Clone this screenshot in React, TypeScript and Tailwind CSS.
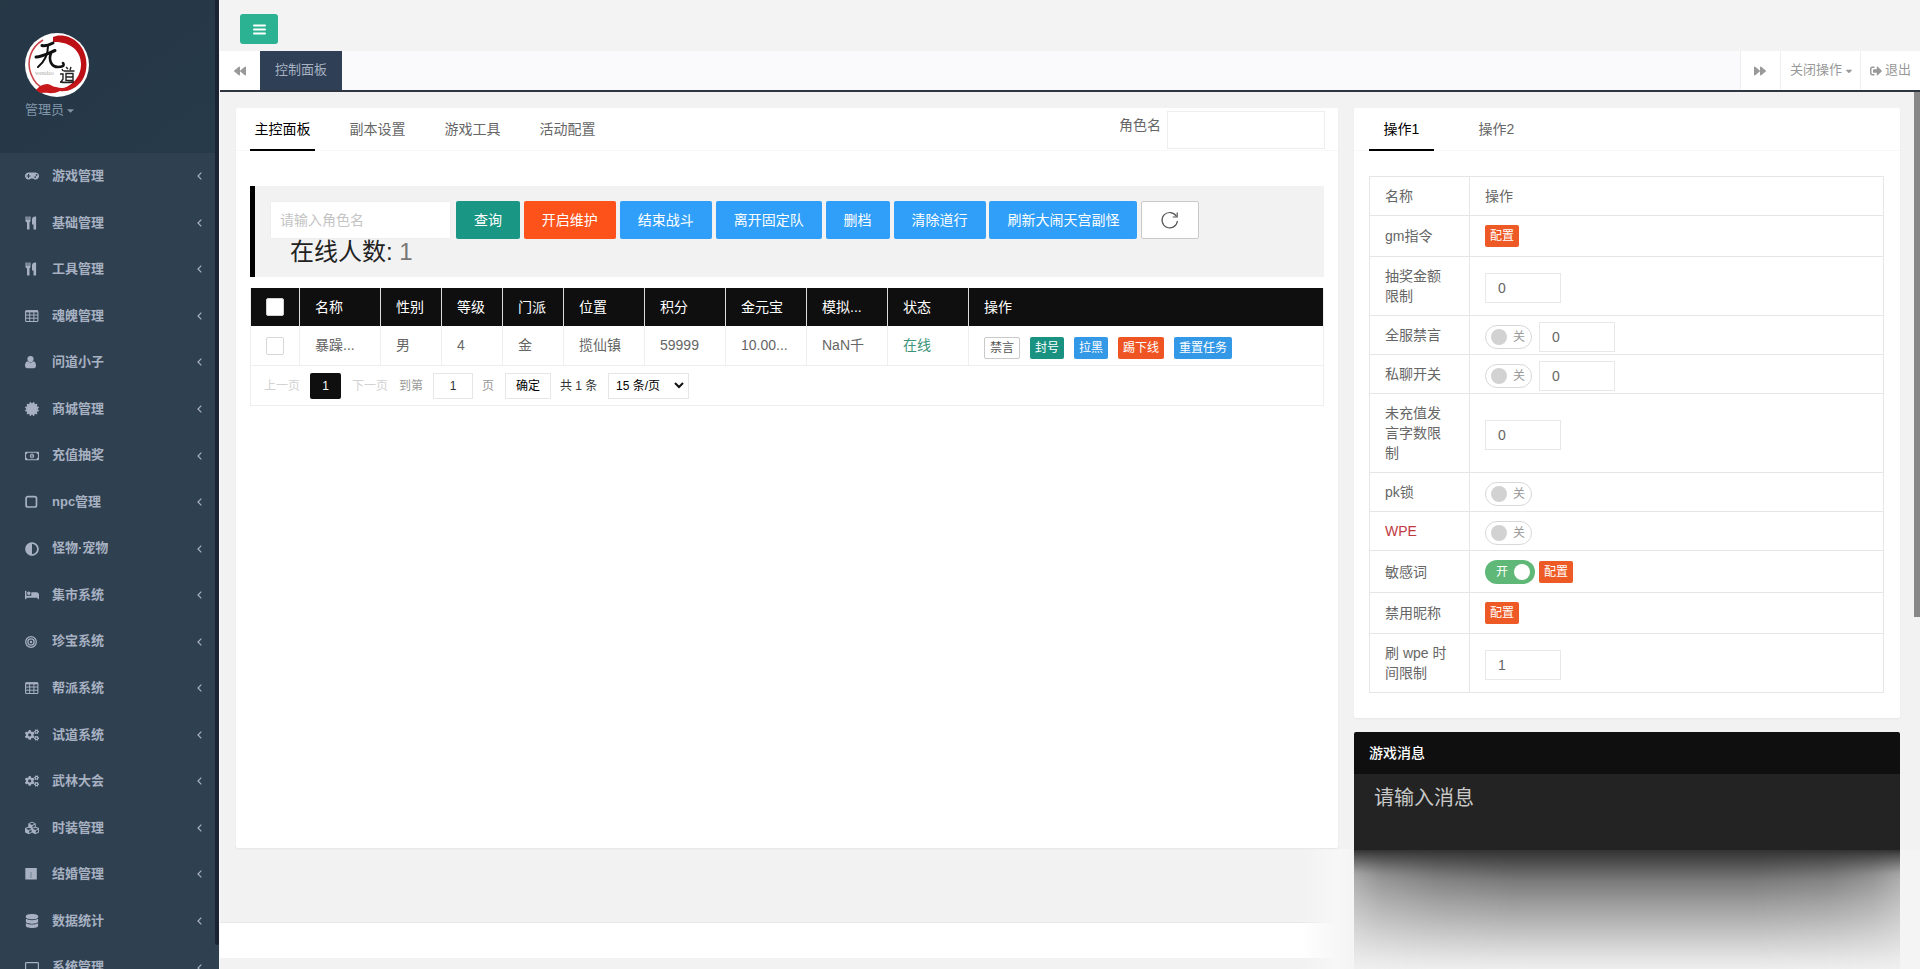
import type { ReactNode } from 'react';
import type { IconType } from 'react-icons';
import {
  FaAdjust, FaBackward, FaBed, FaCaretDown, FaCertificate, FaCogs, FaCubes, FaDatabase, FaForward, FaGamepad,
  FaRegMoneyBillAlt, FaSignOutAlt,
} from 'react-icons/fa';

type IconProps = { className?: string };

function CutleryIcon({ className }: IconProps) {
  return (
    <svg className={className} viewBox="0 0 14 14" fill="currentColor">
      <path d="M0.500 0.500 h1.200 v3.500 h0.700 v-3.500 h1.200 v3.500 h0.700 v-3.500 h1.200 v4.500 q0 1-1 1.400 v6.600 q0 0.500-0.500 0.500 h-1.500 q-0.500 0-0.500-0.500 v-6.600 q-1.500-0.400-1.500-1.400 Z" />
      <path d="M7 3.500 q0-3 3.500-3 h0.600 v12.500 q0 0.500-0.500 0.500 h-1.600 q-0.500 0-0.500-0.500 v-4.500 h-1.500 Z" />
    </svg>
  );
}

function TableIcon({ className }: IconProps) {
  return (
    <svg className={className} viewBox="0 0 14 14" fill="none" stroke="currentColor">
      <rect x="0.600" y="1.800" width="12.300" height="10.700" rx="1" strokeWidth="1.100" />
      <path d="M0.600 2.400 H13" strokeWidth="2" />
      <path d="M0.600 6 H13 M0.600 9.200 H13 M4.700 2 V12.500 M8.900 2 V12.500" strokeWidth="1" />
    </svg>
  );
}

function UserIcon({ className }: IconProps) {
  return (
    <svg className={className} viewBox="0 0 14 14" fill="currentColor">
      <circle cx="5.500" cy="4" r="3.100" />
      <path d="M2.600 6.300 Q5.500 8.800 8.400 6.300 Q11 6.800 11 10.800 Q11 13.200 9 13.200 H2 Q0 13.200 0 10.800 Q0 6.800 2.600 6.300 Z" />
    </svg>
  );
}

function SquareIcon({ className }: IconProps) {
  return (
    <svg className={className} viewBox="0 0 14 14" fill="none" stroke="currentColor" strokeWidth="1.700">
      <rect x="1.100" y="1.600" width="10.400" height="10.400" rx="1.800" />
    </svg>
  );
}

function BullseyeIcon({ className }: IconProps) {
  return (
    <svg className={className} viewBox="0 0 14 14" fill="none" stroke="currentColor" strokeWidth="1.300">
      <circle cx="6" cy="7" r="5.300" />
      <circle cx="6" cy="7" r="3.100" />
      <circle cx="6" cy="7" r="1.200" fill="currentColor" stroke="none" />
    </svg>
  );
}

function PageIcon({ className }: IconProps) {
  return (
    <svg className={className} viewBox="0 0 14 14">
      <rect x="0.300" y="1" width="11.500" height="11.500" fill="currentColor" />
      <path d="M6 5 V11" stroke="#7f8fa1" strokeWidth="1.300" />
    </svg>
  );
}

function LaptopIcon({ className }: IconProps) {
  return (
    <svg className={className} viewBox="0 0 14 14" fill="none" stroke="currentColor" strokeWidth="1.200">
      <rect x="0.600" y="1.600" width="12.800" height="9.500" rx="0.800" />
      <path d="M4 13 H10" />
    </svg>
  );
}

const menu: { icon: IconType | ((p: IconProps) => ReactNode); label: string }[] = [
  { icon: FaGamepad, label: '游戏管理' },
  { icon: CutleryIcon, label: '基础管理' },
  { icon: CutleryIcon, label: '工具管理' },
  { icon: TableIcon, label: '魂魄管理' },
  { icon: UserIcon, label: '问道小子' },
  { icon: FaCertificate, label: '商城管理' },
  { icon: FaRegMoneyBillAlt, label: '充值抽奖' },
  { icon: SquareIcon, label: 'npc管理' },
  { icon: FaAdjust, label: '怪物·宠物' },
  { icon: FaBed, label: '集市系统' },
  { icon: BullseyeIcon, label: '珍宝系统' },
  { icon: TableIcon, label: '帮派系统' },
  { icon: FaCogs, label: '试道系统' },
  { icon: FaCogs, label: '武林大会' },
  { icon: FaCubes, label: '时装管理' },
  { icon: PageIcon, label: '结婚管理' },
  { icon: FaDatabase, label: '数据统计' },
  { icon: LaptopIcon, label: '系统管理' },
];

function Logo() {
  return (
    <svg className="w-16 h-16" viewBox="0 0 64 64">
      <circle cx="32" cy="32" r="32" fill="#fff" />
      <path d="M28 4 C34 1 46 2 54 11 C64 22 64 42 54 51 C47 58 40 59 33 57 C46 54 56 45 56 31 C56 17 44 8 28 9 Z" fill="#bd1016" />
      <path d="M18 7 C6 14 1 28 6 41 C9 49 14 54 20 56" stroke="#c9454a" strokeWidth="1.600" fill="none" />
      <path d="M11 57 C14 53 18 51 22 51 C26 51 27 54 31 54 C40 57 50 53 57 44 C52 56 42 59 35 58 C28 62 20 59 17 60 C14 60 13 58 11 57 Z" fill="#c8181c" />
      <text x="10" y="42" fontSize="6" fill="#aaa" fontFamily="Liberation Serif">wendao</text>
      <path d="M17 12.500 C21 13.500 24 12 28 10" stroke="#111" strokeWidth="3" strokeLinecap="round" fill="none" />
      <path d="M11 24 C17 24 24 20 30 17.500" stroke="#111" strokeWidth="3" strokeLinecap="round" fill="none" />
      <path d="M23 13 C23 22 19 29 13 34" stroke="#111" strokeWidth="2" strokeLinecap="round" fill="none" />
      <path d="M26 20 C23 28 27 34 33 34 C37 34 40 33 38 30" stroke="#111" strokeWidth="2.600" strokeLinecap="round" fill="none" />
      <path d="M41 34 l2 2 M46 34 l-1 3 M38.500 38 h11 M41 40.500 h7 v7 h-7 z M41 44 h7 M37 36 l1 2 M35 41 h3 v5 l-2 3 M35 49 q6 1 14 0" stroke="#222" strokeWidth="1.400" fill="none" />
    </svg>
  );
}

function Sidebar() {
  return (
    <nav className="relative w-[220px] h-full shrink-0 bg-[#2f4050] border-r border-[#f8f8fc] overflow-hidden text-[13px]">
      <div className="h-[153px] bg-linear-to-br from-[#263746] to-[#263a4a] px-[25px] pt-[33px]">
        <Logo />
        <div className="flex items-center gap-px mt-[3px] leading-5 text-[#8095a8]">
          管理员
          <FaCaretDown className="size-[11px]" />
        </div>
      </div>
      {menu.map(({ icon: Icon, label }) => (
        <div key={label} className="flex items-center h-[46.550px] pl-[25px] pr-[17px] font-bold text-[#a7b1c2]">
          <span className="w-[27px]">
            <Icon className="size-[14px]" />
          </span>
          <span className="flex-1">{label}</span>
          <svg className="w-[5px] h-2" viewBox="0 0 5 8" fill="none" stroke="currentColor" strokeWidth="1.200">
            <path d="M4.300 0.600 L1 4 L4.300 7.400" />
          </svg>
        </div>
      ))}
      <div className="absolute right-0 top-0 w-1 h-[945px] rounded-b bg-[#1c2333]" />
    </nav>
  );
}

function TopBar() {
  return (
    <header className="shrink-0 text-[13px] text-[#999]">
      <div className="h-[51px] bg-[#f3f3f4] pl-5 pt-[14px]">
        <div className="flex items-center justify-center w-[38px] h-[30px] rounded-[3px] bg-[#2bb293] text-white">
          <svg className="w-[13px] h-[11px]" viewBox="0 0 13 11" stroke="currentColor" strokeWidth="2" strokeLinecap="round">
            <path d="M1 1.500 H12 M1 5.500 H12 M1 9.500 H12" />
          </svg>
        </div>
      </div>
      <div className="flex h-[41px] bg-[#fafafc] border-b-2 border-[#2f3540]">
        <div className="flex items-center justify-center w-10 bg-white">
          <FaBackward className="size-3" />
        </div>
        <div className="flex items-center justify-center w-[82px] bg-[#2f4056] text-[#a7b1c2]">控制面板</div>
        <div className="flex-1" />
        <div className="flex items-center w-10 pl-[13px] bg-white border-l border-[#eee]">
          <FaForward className="size-3" />
        </div>
        <div className="flex items-center gap-[2px] w-20 pl-[9px] bg-white border-l border-[#eee]">
          关闭操作
          <FaCaretDown className="size-[10px]" />
        </div>
        <div className="flex items-center gap-[3px] w-[60px] pl-[9px] bg-white border-l border-[#eee]">
          <FaSignOutAlt className="size-3" />
          退出
        </div>
      </div>
    </header>
  );
}

function Tabs({ items }: { items: string[] }) {
  return (
    <div className="flex gap-[30px]">
      {items.map((item, i) => (
        <div
          key={item}
          className={`w-[65px] h-[43px] leading-[43px] text-center ${i === 0 ? 'border-b-2 border-black text-black' : 'text-[#666]'}`}
        >
          {item}
        </div>
      ))}
    </div>
  );
}

const actions = [
  { label: '查询', color: 'bg-[#1a9684]' },
  { label: '开启维护', color: 'bg-[#fd5219]' },
  { label: '结束战斗', color: 'bg-[#2f9ffa]' },
  { label: '离开固定队', color: 'bg-[#2f9ffa]' },
  { label: '删档', color: 'bg-[#2f9ffa]' },
  { label: '清除道行', color: 'bg-[#2f9ffa]' },
  { label: '刷新大闹天宫副怪', color: 'bg-[#2f9ffa]' },
];

function RefreshIcon() {
  return (
    <svg className="size-5" viewBox="0 0 20 20" fill="none" stroke="#555" strokeWidth="1.200">
      <path d="M16.500 6.500 A7.700 7.700 0 1 0 17.400 11" />
      <path d="M17.200 2.500 V7 H12.700" />
    </svg>
  );
}

function Toolbar() {
  return (
    <div className="h-[91px] border-l-[5px] border-black bg-[#f2f2f2] pl-[15px] pt-[15px]">
      <div className="flex gap-[3.930px]">
        <div className="w-[181px] h-[38px] mr-px pl-[9px] bg-white border border-[#eee] leading-9 text-[#c4c4c4]">
          请输入角色名
        </div>
        {actions.map((a) => (
          <div key={a.label} className={`${a.color} h-[38px] px-[18px] leading-[38px] rounded-xs whitespace-nowrap text-white`}>
            {a.label}
          </div>
        ))}
        <div className="flex items-center justify-center w-[58px] h-[38px] rounded-xs bg-white border border-[#c9c9c9]">
          <RefreshIcon />
        </div>
      </div>
      <div className="pl-5 text-2xl leading-[26px] text-[#222]">
        在线人数: <span className="text-[#777]">1</span>
      </div>
    </div>
  );
}

const columns = ['名称', '性别', '等级', '门派', '位置', '积分', '金元宝', '模拟...', '状态', '操作'];
const player = ['暴躁...', '男', '4', '金', '揽仙镇', '59999', '10.00...', 'NaN千', '在线'];
const grid = 'grid grid-cols-[49px_81px_61px_61px_61px_81px_81px_81px_81px_81px_1fr]';

function SmallButton({ color, children }: { color: string; children: ReactNode }) {
  return <span className={`${color} h-[22px] px-[5px] text-xs rounded-xs whitespace-nowrap`}>{children}</span>;
}

function PlayerTable() {
  return (
    <div className="mt-[11px] border border-t-0 border-[#eee]">
      <div className={`${grid} h-[38px] bg-[#0f0f0f] text-white leading-[38px]`}>
        <div className="flex items-center justify-center border-r border-[#ddd]">
          <span className="size-[18px] rounded-xs bg-white border border-[#d2d2d2]" />
        </div>
        {columns.map((c) => (
          <div key={c} className="pl-[15px] border-r border-[#ddd] last:border-0">{c}</div>
        ))}
      </div>
      <div className={`${grid} h-10 border-b border-[#eee] leading-[39px]`}>
        <div className="flex items-center justify-center border-r border-[#eee]">
          <span className="size-[18px] rounded-xs bg-white border border-[#d8d8d8]" />
        </div>
        {player.map((v) => (
          <div key={v} className={`pl-[15px] border-r border-[#eee] ${v === '在线' ? 'text-[#3d9478]' : ''}`}>{v}</div>
        ))}
        <div className="flex items-center gap-[10px] pl-[15px] pt-1 text-white">
          <SmallButton color="bg-white border border-[#c9c9c9] text-[#555] leading-5">禁言</SmallButton>
          <SmallButton color="bg-[#1a9281] leading-[22px]">封号</SmallButton>
          <SmallButton color="bg-[#3398e6] leading-[22px]">拉黑</SmallButton>
          <SmallButton color="bg-[#ee5522] leading-[22px]">踢下线</SmallButton>
          <SmallButton color="bg-[#3398e6] leading-[22px]">重置任务</SmallButton>
        </div>
      </div>
      <div className="flex items-center h-[39px] pl-[13px] text-xs text-[#333] *:shrink-0">
        <span className="w-[46px] text-[#d2d2d2]">上一页</span>
        <span className="w-[31px] h-[26px] leading-[26px] text-center rounded-xs bg-[#0f0f0f] text-white">1</span>
        <span className="w-[47px] ml-[11px] text-[#d2d2d2]">下一页</span>
        <span className="w-[34px] text-[#999]">到第</span>
        <span className="w-10 h-[26px] leading-6 text-center border border-[#e6e6e6]">1</span>
        <span className="w-[32px] pl-[9px] text-[#999]">页</span>
        <span className="w-[46px] h-[26px] leading-6 text-center border border-[#e6e6e6] text-black">确定</span>
        <span className="pl-[9px] w-[57px] whitespace-nowrap">共 1 条</span>
        <span className="flex items-center justify-between w-[81px] h-[26px] pl-[7px] pr-1 border border-[#e6e6e6] text-black">
          15 条/页
          <svg className="w-[10px] h-[7px]" viewBox="0 0 10 7" fill="none" stroke="#111" strokeWidth="2">
            <path d="M1 1 L5 5 L9 1" />
          </svg>
        </span>
      </div>
    </div>
  );
}

function MainPanel() {
  return (
    <section className="w-[1102px] h-[740px] rounded-xs bg-white shadow-xs px-[14px]">
      <div className="flex justify-between -mx-[14px] pl-[14px] pr-[13px] h-[43px] border-b border-[#f8f8f8]">
        <Tabs items={['主控面板', '副本设置', '游戏工具', '活动配置']} />
        <div className="flex">
          <span className="pr-[6px] leading-[34px]">角色名</span>
          <div className="w-[158px] h-[38px] mt-[3px] bg-white border border-[#eee]" />
        </div>
      </div>
      <div className="pt-[35px]">
        <Toolbar />
        <PlayerTable />
      </div>
    </section>
  );
}

function Toggle({ on }: { on?: boolean }) {
  if (on) {
    return (
      <span className="flex items-center justify-between w-[50px] h-6 pl-[11px] pr-[5px] rounded-full bg-[#5fb878] text-xs text-white">
        开
        <span className="size-4 rounded-full bg-white" />
      </span>
    );
  }
  return (
    <span className="relative top-[2px] flex items-center justify-between w-[47px] h-6 pl-[5px] pr-[6px] rounded-full bg-white border border-[#d8d8d8] text-xs text-[#999]">
      <span className="size-4 rounded-full bg-[#d2d2d2]" />
      关
    </span>
  );
}

function NumberBox({ value, beside }: { value: string; beside?: boolean }) {
  return (
    <span className={`${beside ? 'mt-[3px] ml-[3px]' : 'mt-[3px]'} w-[76px] h-[30px] pl-[12px] leading-7 border border-[#e8e8e8] bg-white`}>
      {value}
    </span>
  );
}

const config = <SmallButton color="bg-[#ed5a26] text-white leading-[22px]">配置</SmallButton>;

const settings: { label: string; height: string; color?: string; control: ReactNode }[] = [
  { label: '名称', height: 'h-[39px]', control: '操作' },
  { label: 'gm指令', height: 'h-[41px]', control: config },
  { label: '抽奖金额限制', height: 'h-[59px]', control: <NumberBox value="0" /> },
  { label: '全服禁言', height: 'h-[39px]', control: <><Toggle /><NumberBox value="0" beside /></> },
  { label: '私聊开关', height: 'h-[39px]', control: <><Toggle /><NumberBox value="0" beside /></> },
  { label: '未充值发言字数限制', height: 'h-[79px]', control: <NumberBox value="0" /> },
  { label: 'pk锁', height: 'h-[39px]', control: <Toggle /> },
  { label: 'WPE', height: 'h-[39px]', color: 'text-[#c0393f]', control: <Toggle /> },
  { label: '敏感词', height: 'h-[42px]', control: <><Toggle on />{config}</> },
  { label: '禁用昵称', height: 'h-[41px]', control: config },
  { label: '刷 wpe 时间限制', height: 'h-[59px]', control: <NumberBox value="1" /> },
];

function SettingsPanel() {
  return (
    <section className="h-[610px] rounded-xs bg-white shadow-xs pl-[15px] pr-4">
      <div className="-ml-[15px] -mr-4 pl-[15px] h-[43px] border-b border-[#f8f8f8]">
        <Tabs items={['操作1', '操作2']} />
      </div>
      <div className="mt-[25px] border-t border-l border-[#e6e6e6]">
        {settings.map((s) => (
          <div key={s.label} className={`${s.height} flex border-b border-r border-[#e6e6e6]`}>
            <div className={`flex items-center w-[100px] px-[15px] border-r border-[#e6e6e6] leading-5 ${s.color ?? ''}`}>{s.label}</div>
            <div className="flex items-center gap-1 pl-[15px]">{s.control}</div>
          </div>
        ))}
      </div>
    </section>
  );
}

function MessagePanel() {
  return (
    <section className="mt-[14px]">
      <div className="h-[42px] pl-[15px] leading-[42px] rounded-t-xs bg-[#0f0f0f] text-white font-medium">游戏消息</div>
      <div className="h-[76px] pl-5 pt-[9px] bg-[#232323] text-xl leading-[30px] text-[#c8c8c8]">请输入消息</div>
      {/* layer shadow, clipped to the card and lighter towards both sides */}
      <div className="h-[119px] bg-[linear-gradient(#333_0%,#525252_12%,#7a7a7a_26%,#999_43%,#b4b4b4_60%,#cfcfcf_77%,#e5e5e5_92%,#eee_100%)]">
        <div className="h-full bg-[linear-gradient(90deg,#f2f2f270_0%,#f2f2f240_5%,#f2f2f218_15%,#f2f2f200_30%,#f2f2f200_72%,#f2f2f218_87%,#f2f2f240_95%,#f2f2f270_100%)] mask-t-from-80%" />
      </div>
    </section>
  );
}

export default function App() {
  return (
    <div className="flex w-[1920px] h-[969px] overflow-hidden bg-[#f2f2f2] font-['Liberation_Sans','Noto_Sans_CJK_SC',sans-serif] text-sm text-[#666]">
      <Sidebar />
      <div className="flex-1 min-w-0 flex flex-col">
        <TopBar />
        <main className="relative flex-1 min-h-0">
          <div className="absolute inset-x-0 top-[830px] h-9 bg-white border-t border-[#e7eaec]" />
          <div className="absolute right-0 top-[757px] w-[620px] h-[120px] bg-[linear-gradient(90deg,#f5f5f500,#f7f7f7_6%,#f4f4f4_9%)]" />
          <div className="relative flex gap-4 pl-4 pt-4">
            <MainPanel />
            <div className="w-[546px]">
              <SettingsPanel />
              <MessagePanel />
            </div>
          </div>
          <div className="absolute right-0 top-0 w-[6px] h-[525px] bg-[#888]" />
        </main>
      </div>
    </div>
  );
}
